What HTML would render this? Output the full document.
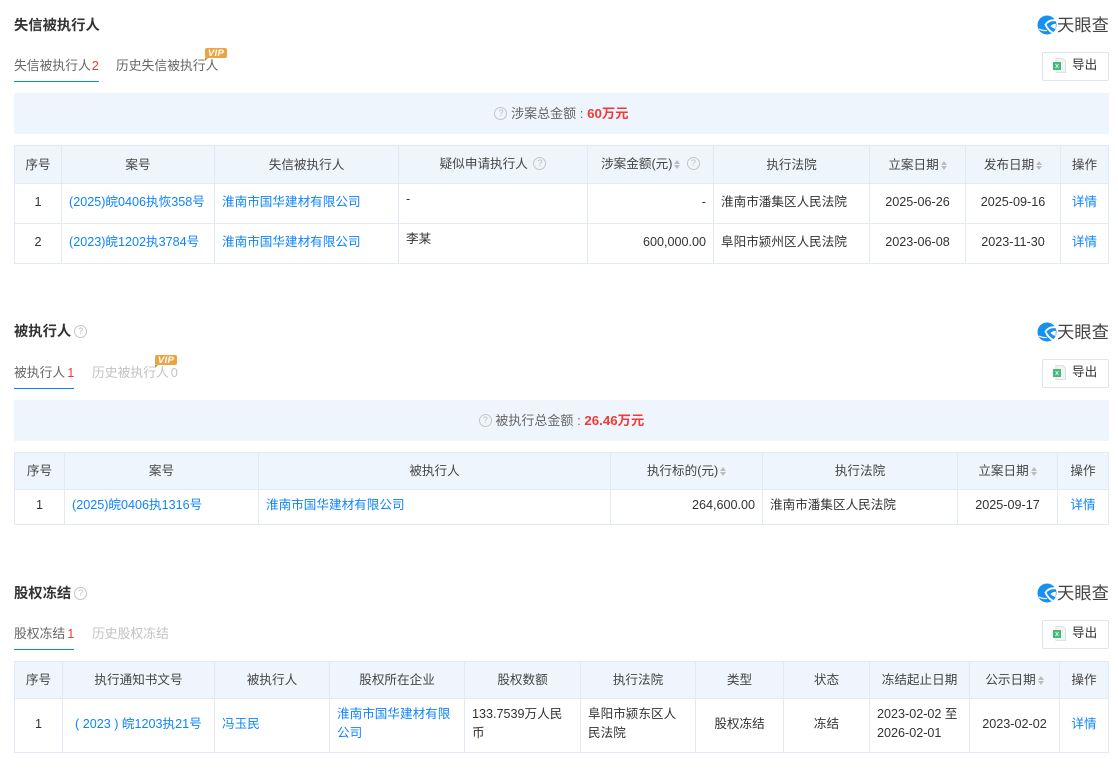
<!DOCTYPE html>
<html lang="zh">
<head>
<meta charset="utf-8">
<title>失信被执行人</title>
<style>
html,body{margin:0;padding:0;background:#fff}
body{width:1118px;height:779px;position:relative;overflow:hidden;font-family:"Liberation Sans","Noto Sans CJK SC",sans-serif;font-size:12.6px;color:#333}
.a{position:absolute;white-space:nowrap}
.title{font-size:14.3px;font-weight:700;color:#333;line-height:20px;left:14px}
.tab{font-size:12.8px;line-height:20px;color:#666}
.tab.dis{color:#c2c2c2}
.red{color:#f03a3a;margin-left:2px}
.line{position:absolute;left:14px;height:1px;background:#0d84ee}
.vip{position:absolute;width:22px;height:10px;background:#eba444;border-radius:2px;color:#fff;font:italic 700 9.5px/11px "Liberation Sans",sans-serif;text-align:center;letter-spacing:.3px}
.vip:after{content:"";position:absolute;left:0;top:10px;border-top:3px solid #d08a2e;border-right:3px solid transparent}
.bar{position:absolute;left:14px;width:1095px;height:41px;background:#eef5fc;text-align:center;line-height:41px;color:#666;font-size:13px}
.bar b{color:#f03a3a;font-weight:700;font-size:13.3px}
.bar u{display:inline-block;width:11px;text-align:center;text-decoration:none}
.q{display:inline-block;box-sizing:border-box;width:13px;height:13px;border:1px solid #c6c6c6;border-radius:50%;color:#bdbdbd;font:normal 400 9px/11px "Liberation Sans",sans-serif;text-align:center;vertical-align:-2px;position:relative;top:-4px}
.title .q{left:-1px}
.exp{position:absolute;left:1042px;width:67px;height:29px;box-sizing:border-box;border:1px solid #dfe3ea;border-radius:2px;background:#fff}
.exp span{position:absolute;left:29px;top:2px;line-height:20px;color:#333;font-size:12.6px}
.exp svg{position:absolute;left:10px;top:5px}
.logo{position:absolute;left:1037px;width:73px;height:20px}
.logo svg{position:absolute;left:0;top:0}
.logo span{position:absolute;left:20px;top:-2px;font-size:17.3px;line-height:24px;font-weight:400;color:#444}
table{position:absolute;left:14px;border-collapse:collapse;table-layout:fixed;width:1094px;font-size:12.6px}
th,td{border:1px solid #e2ebf3;padding:0 7px;box-sizing:border-box;overflow:hidden}
th{background:#eef5fc;font-weight:400;color:#444;text-align:center;padding-bottom:3px}
td{color:#333;line-height:19px;text-align:left;padding-bottom:3px}
td.c{text-align:center}
td.r{text-align:right}
td.n{white-space:nowrap}
td.t{padding-bottom:8px}
a{color:#0d84ff;text-decoration:none}
.s{display:inline-block;width:6px;height:9px;position:relative;margin-left:2px;vertical-align:-1px}
.s:before,.s:after{content:"";position:absolute;left:0;border-left:3px solid transparent;border-right:3px solid transparent}
.s:before{top:0;border-bottom:4px solid #bcbcbc}
.s:after{bottom:0;border-top:4px solid #bcbcbc}
</style>
</head>
<body>

<!-- Section 1 -->
<div class="a title" style="top:16px">失信被执行人</div>
<div class="logo" style="top:15px"><svg width="20" height="20" viewBox="0 0 20 20"><circle cx="10" cy="10" r="9.5" fill="#1790f0"/><path d="M19.500 5.500C15 4.500 11 6 8.500 9.500c1.500 4 4.500 7 8.500 9" fill="none" stroke="#fff" stroke-width="1.800"/><path d="M2 14c3 1.500 5.500 2 8 1.500" fill="none" stroke="#fff" stroke-width="1"/><path d="M19 9c-2-.5-4 .5-5.500 2 1.500 1.500 3 2.500 5 3z" fill="#fff"/></svg><span>天眼查</span></div>
<div class="a tab" style="left:14px;top:56px">失信被执行人<span class="red" style="margin-left:1px">2</span></div>
<div class="a tab" style="left:116px;top:56px">历史失信被执行人</div>
<div class="vip" style="left:205px;top:48px">VIP</div>
<div class="line" style="top:81px;width:85px"></div>
<div class="exp" style="top:52px"><svg width="13" height="15" viewBox="0 0 13 15"><path d="M3 .5h7l2.500 2.500v11.500H3z" fill="#f1f2f4" stroke="#dfe1e5"/><rect x="0" y="4" width="8" height="8" fill="#45b97c"/><path d="M2.500 6l3 4M5.500 6l-3 4" stroke="#d8f0e2"/></svg><span>导出</span></div>
<div class="bar" style="top:93px"><i class="q">?</i> 涉案总金额<u>:</u><b>60万元</b></div>
<table style="top:145px">
<colgroup><col style="width:47px"><col style="width:153px"><col style="width:184px"><col style="width:189px"><col style="width:126px"><col style="width:156px"><col style="width:96px"><col style="width:95px"><col style="width:48px"></colgroup>
<tr style="height:38px"><th>序号</th><th>案号</th><th>失信被执行人</th><th>疑似申请执行人 <i class="q" style="margin-left:2px">?</i></th><th>涉案金额(元)<i class="s"></i> <i class="q" style="margin-left:3px">?</i></th><th>执行法院</th><th>立案日期<i class="s"></i></th><th>发布日期<i class="s"></i></th><th>操作</th></tr>
<tr style="height:40px"><td class="c">1</td><td class="n"><a>(2025)皖0406执恢358号</a></td><td class="n"><a>淮南市国华建材有限公司</a></td><td class="t">-</td><td class="r">-</td><td class="n">淮南市潘集区人民法院</td><td class="c">2025-06-26</td><td class="c">2025-09-16</td><td class="c"><a>详情</a></td></tr>
<tr style="height:40px"><td class="c">2</td><td class="n"><a>(2023)皖1202执3784号</a></td><td class="n"><a>淮南市国华建材有限公司</a></td><td class="t">李某</td><td class="r">600,000.00</td><td class="n">阜阳市颍州区人民法院</td><td class="c">2023-06-08</td><td class="c">2023-11-30</td><td class="c"><a>详情</a></td></tr>
</table>

<!-- Section 2 -->
<div class="a title" style="top:322px">被执行人 <i class="q">?</i></div>
<div class="logo" style="top:322px"><svg width="20" height="20" viewBox="0 0 20 20"><circle cx="10" cy="10" r="9.5" fill="#1790f0"/><path d="M19.500 5.500C15 4.500 11 6 8.500 9.500c1.500 4 4.500 7 8.500 9" fill="none" stroke="#fff" stroke-width="1.800"/><path d="M2 14c3 1.500 5.500 2 8 1.500" fill="none" stroke="#fff" stroke-width="1"/><path d="M19 9c-2-.5-4 .5-5.500 2 1.500 1.500 3 2.500 5 3z" fill="#fff"/></svg><span>天眼查</span></div>
<div class="a tab" style="left:14px;top:363px">被执行人<span class="red">1</span></div>
<div class="a tab dis" style="left:92px;top:363px">历史被执行人<span style="margin-left:2px">0</span></div>
<div class="vip" style="left:155px;top:355px">VIP</div>
<div class="line" style="top:388px;width:60px"></div>
<div class="exp" style="top:359px"><svg width="13" height="15" viewBox="0 0 13 15"><path d="M3 .5h7l2.500 2.500v11.500H3z" fill="#f1f2f4" stroke="#dfe1e5"/><rect x="0" y="4" width="8" height="8" fill="#45b97c"/><path d="M2.500 6l3 4M5.500 6l-3 4" stroke="#d8f0e2"/></svg><span>导出</span></div>
<div class="bar" style="top:400px"><i class="q">?</i> 被执行总金额<u>:</u><b>26.46万元</b></div>
<table style="top:452px">
<colgroup><col style="width:50px"><col style="width:194px"><col style="width:352px"><col style="width:152px"><col style="width:195px"><col style="width:100px"><col style="width:51px"></colgroup>
<tr style="height:37px"><th>序号</th><th>案号</th><th>被执行人</th><th>执行标的(元)<i class="s"></i></th><th>执行法院</th><th>立案日期<i class="s"></i></th><th>操作</th></tr>
<tr style="height:35px"><td class="c">1</td><td class="n"><a>(2025)皖0406执1316号</a></td><td class="n"><a>淮南市国华建材有限公司</a></td><td class="r">264,600.00</td><td class="n">淮南市潘集区人民法院</td><td class="c">2025-09-17</td><td class="c"><a>详情</a></td></tr>
</table>

<!-- Section 3 -->
<div class="a title" style="top:584px">股权冻结 <i class="q">?</i></div>
<div class="logo" style="top:583px"><svg width="20" height="20" viewBox="0 0 20 20"><circle cx="10" cy="10" r="9.5" fill="#1790f0"/><path d="M19.500 5.500C15 4.500 11 6 8.500 9.500c1.500 4 4.500 7 8.500 9" fill="none" stroke="#fff" stroke-width="1.800"/><path d="M2 14c3 1.500 5.500 2 8 1.500" fill="none" stroke="#fff" stroke-width="1"/><path d="M19 9c-2-.5-4 .5-5.500 2 1.500 1.500 3 2.500 5 3z" fill="#fff"/></svg><span>天眼查</span></div>
<div class="a tab" style="left:14px;top:624px">股权冻结<span class="red">1</span></div>
<div class="a tab dis" style="left:92px;top:624px">历史股权冻结</div>
<div class="line" style="top:649px;width:60px"></div>
<div class="exp" style="top:620px"><svg width="13" height="15" viewBox="0 0 13 15"><path d="M3 .5h7l2.500 2.500v11.500H3z" fill="#f1f2f4" stroke="#dfe1e5"/><rect x="0" y="4" width="8" height="8" fill="#45b97c"/><path d="M2.500 6l3 4M5.500 6l-3 4" stroke="#d8f0e2"/></svg><span>导出</span></div>
<table style="top:661px">
<colgroup><col style="width:48px"><col style="width:152px"><col style="width:115px"><col style="width:135px"><col style="width:116px"><col style="width:115px"><col style="width:88px"><col style="width:86px"><col style="width:100px"><col style="width:90px"><col style="width:49px"></colgroup>
<tr style="height:37px"><th>序号</th><th>执行通知书文号</th><th>被执行人</th><th>股权所在企业</th><th>股权数额</th><th>执行法院</th><th>类型</th><th>状态</th><th>冻结起止日期</th><th>公示日期<i class="s"></i></th><th>操作</th></tr>
<tr style="height:54px"><td class="c">1</td><td class="n" style="padding-left:12px"><a>( 2023 ) 皖1203执21号</a></td><td><a>冯玉民</a></td><td><a>淮南市国华建材有限公司</a></td><td>133.7539万人民币</td><td>阜阳市颍东区人民法院</td><td class="c">股权冻结</td><td class="c">冻结</td><td>2023-02-02 至 2026-02-01</td><td class="c">2023-02-02</td><td class="c"><a>详情</a></td></tr>
</table>

</body>
</html>
